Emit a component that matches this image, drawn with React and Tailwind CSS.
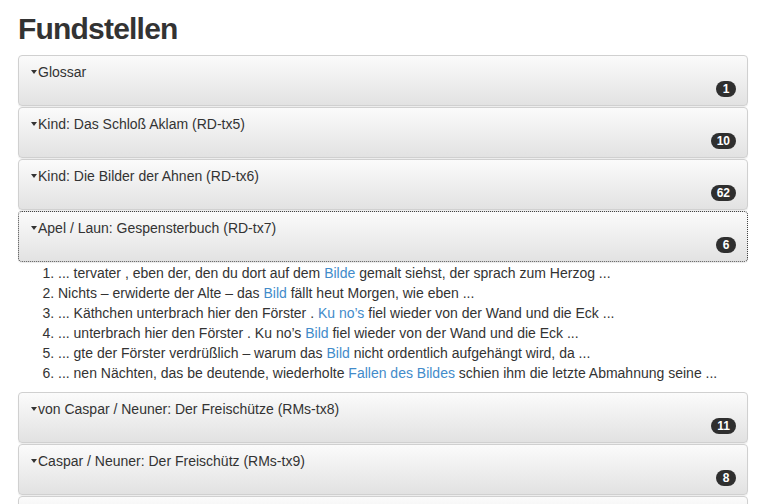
import React from "react";

const panels = [
  { title: "Glossar", count: "1" },
  { title: "Kind: Das Schloß Aklam (RD-tx5)", count: "10" },
  { title: "Kind: Die Bilder der Ahnen (RD-tx6)", count: "62" },
  { title: "Apel / Laun: Gespensterbuch (RD-tx7)", count: "6", open: true },
  { title: "von Caspar / Neuner: Der Freischütze (RMs-tx8)", count: "11" },
  { title: "Caspar / Neuner: Der Freischütz (RMs-tx9)", count: "8" },
  { title: "", count: "" },
];

const items = [
  ["... tervater , eben der, den du dort auf dem ", "Bilde", " gemalt siehst, der sprach zum Herzog ..."],
  ["Nichts – erwiderte der Alte – das ", "Bild", " fällt heut Morgen, wie eben ..."],
  ["... Käthchen unterbrach hier den Förster . ", "Ku no’s", " fiel wieder von der Wand und die Eck ..."],
  ["... unterbrach hier den Förster . Ku no’s ", "Bild", " fiel wieder von der Wand und die Eck ..."],
  ["... gte der Förster verdrüßlich – warum das ", "Bild", " nicht ordentlich aufgehängt wird, da ..."],
  ["... nen Nächten, das be deutende, wiederholte ", "Fallen des Bildes", " schien ihm die letzte Abmahnung seine ..."],
];

function Panel({ title, count, open }) {
  return (
    <div
      className={
        "h-[51px] mb-[1px] rounded-[4px] bg-gradient-to-b from-[#fbfbfb] to-[#e2e2e2] shadow-[0_1px_1px_rgba(0,0,0,0.08)] " +
        (open ? "border border-dotted border-[#444]" : "border border-[#d0d0d0]")
      }
    >
      {title && (
        <div className="pl-[12px] pr-[11px] pt-[6px]">
          <div className="h-5 leading-5 text-[14px] text-[#333] flex items-center">
            <span className="inline-block w-0 h-0 border-x-[3px] border-x-transparent border-t-[4px] border-t-[#333] mr-[1px]" />
            <span>{title}</span>
          </div>
          <div className="flex justify-end -mt-[1px]">
            <span className="h-[16px] min-w-[20px] flex items-center justify-center rounded-[8px] bg-[#2f2f2f] text-white text-[12px] font-bold leading-none px-[6px]">
              {count}
            </span>
          </div>
        </div>
      )}
    </div>
  );
}

export default function App() {
  return (
    <div
      className="bg-white min-h-[504px] text-[#333]"
      style={{ fontFamily: '"Liberation Sans", Arial, Helvetica, sans-serif' }}
    >
      <div className="ml-[18px] w-[730px]">
        <h1 className="pt-[11px] mb-[8px] text-[30px] leading-[36px] font-bold tracking-[-0.8px] text-[#333]">
          Fundstellen
        </h1>
        {panels.map((p, idx) => (
          <React.Fragment key={idx}>
            <Panel {...p} />
            {p.open && (
              <ol className="list-decimal pl-10 mt-[1px] mb-[9px] text-[14px] leading-5 text-[#333]">
                {items.map((it, i) => (
                  <li key={i}>
                    {it[0]}
                    <a className="text-[#428bca]">{it[1]}</a>
                    {it[2]}
                  </li>
                ))}
              </ol>
            )}
          </React.Fragment>
        ))}
      </div>
    </div>
  );
}
